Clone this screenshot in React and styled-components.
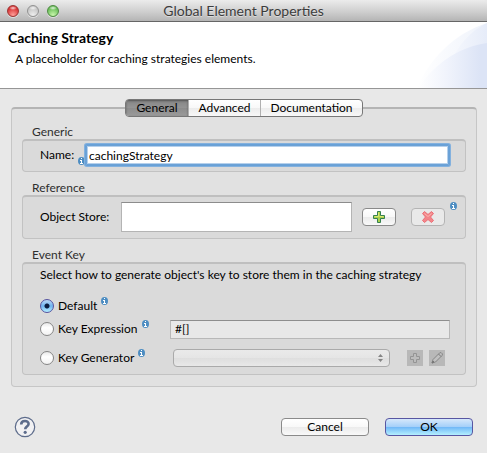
import React, { useState } from "react";
import styled, { createGlobalStyle, css } from "styled-components";

const Global = createGlobalStyle`
  *, *::before, *::after { box-sizing: border-box; }
  body { margin: 0; background: #e8e8e8; }
  body, button, input, select, textarea {
    font: 12px/16px Lato, "Open Sans", sans-serif;
    color: #000;
  }
`;

const Dialog = styled.main`
  min-height: 100vh;
  display: flex;
  flex-direction: column;
  background: #e8e8e8;
`;

const TitleBar = styled.header`
  height: 22px;
  display: grid;
  grid-template-columns: 72px 1fr 72px;
  align-items: center;
  background: linear-gradient(#ececec, #cfcfcf 55%, #b4b4b4);
  border-bottom: 1px solid #666;
  border-radius: 4px 4px 0 0;
`;

const WindowButtons = styled.div`
  display: flex;
  gap: 8px;
  padding-left: 7px;
`;

const WindowButton = styled.button`
  width: 12px;
  height: 12px;
  padding: 0;
  border: 1px solid ${(p) => p.$edge};
  border-radius: 50%;
  background: radial-gradient(ellipse 4px 2px at 50% 20%, #ffffffd0, #ffffff00),
    radial-gradient(circle at 50% 90%, ${(p) => p.$light}, ${(p) => p.$tone} 75%);
  box-shadow: 0 1px 0 #ffffff80;
`;

const WindowTitle = styled.h1`
  margin: 0;
  text-align: center;
  font-size: 14px;
  line-height: 20px;
  font-weight: 400;
  color: #3c3c3c;
  text-shadow: 0 1px 0 #ffffff70;
`;

const Banner = styled.section`
  height: 67px;
  display: flex;
  justify-content: space-between;
  background: #fff;
  border-bottom: 1px solid #969696;
`;

const BannerText = styled.div`
  padding: 7px 0 0 8px;
`;

const Heading = styled.h2`
  margin: 0;
  font-size: 14px;
  line-height: 18px;
  font-weight: 700;
`;

const Description = styled.p`
  margin: 4px 0 0 7px;
`;

const Content = styled.div`
  padding: 10px 10px 0 11px;
`;

const TabList = styled.div`
  position: relative;
  z-index: 1;
  width: fit-content;
  height: 18px;
  margin: 0 auto -10px;
  display: flex;
  border: 1px solid #777;
  border-radius: 4px;
  overflow: hidden;
  background: linear-gradient(#fff, #f8f8f8 50%, #ececec 51%, #f8f8f8);
`;

const Tab = styled.button`
  width: ${(p) => p.$width};
  height: 16px;
  padding: 0;
  border: 0;
  border-left: 1px solid #b0b0b0;
  background: none;
  &:first-child { border-left: 0; }
  ${(p) => p["aria-selected"] && css`
    background: linear-gradient(#858585, #959595 50%, #8c8c8c 51%, #9a9a9a);
    box-shadow: inset 0 1px 2px #555;
  `}
`;

const Panel = styled.section`
  padding: 15px 10px 11px;
  border: 1px solid #c6c6c6;
  border-top: 2px solid #b4b4b4;
  border-radius: 4px;
  background: #e1e1e1;
`;

const Group = styled.fieldset`
  min-width: 0;
  margin: 0 0 8px;
  padding: 0;
  border: 0;
  &:last-child { margin-bottom: 0; }
`;

const GroupTitle = styled.legend`
  height: 15px;
  padding: 0 0 0 10px;
  line-height: 15px;
  color: #2e2e2e;
`;

const GroupBox = styled.div`
  min-height: ${(p) => p.$height};
  padding: 0 ${(p) => p.$right || "15px"} ${(p) => p.$bottom || "0"} 17px;
  display: flex;
  flex-direction: column;
  justify-content: center;
  border: 1px solid #c2c2c2;
  border-top: 2px solid #bfbfbf;
  border-radius: 4px;
  background: #dadada;
`;

const Row = styled.div`
  display: flex;
  align-items: center;
`;

const NameLabel = styled.label`
  width: 38px;
`;

const NameInput = styled.input`
  flex: 1;
  min-width: 0;
  height: 20px;
  margin: 0 1px;
  padding: 0 2px;
  border: 1px solid #6ca2d6;
  outline: 0;
  border-radius: 1px;
  background: #fff;
  box-shadow: inset 0 0 0 1px #b5d0ec, 0 0 0 1px #68a1d8, 0 0 0 2px #83b1de;
`;

const StoreLabel = styled.label`
  width: 81px;
`;

const StoreField = styled.textarea`
  display: block;
  flex: 1;
  min-width: 0;
  height: 30px;
  padding: 6px 4px;
  resize: none;
  outline: 0;
  border: 1px solid #b4b4b4;
  border-top: 1px solid #8c8c8c;
  background: #fff;
`;

const bevel = css`
  border: 1px solid #8a8a8a;
  border-radius: 4px;
  background: linear-gradient(#fff, #f8f8f8 50%, #ebebeb 51%, #f9f9f9);
`;

const IconButton = styled.button`
  ${bevel}
  width: 34px;
  height: 18px;
  padding: 0;
  margin-left: ${(p) => p.$left};
  display: grid;
  place-items: center;
  &:disabled {
    border-color: #b4b4b4;
    background: #e9e9e9;
  }
`;

const InfoSlot = styled.span`
  display: flex;
  align-self: ${(p) => p.$align || "center"};
  margin-left: ${(p) => p.$left || "0"};
`;

const InfoSvg = styled.svg`
  display: block;
  width: 7px;
  height: 8px;
`;

const Hint = styled.p`
  margin: 0 0 14px;
`;

const OptionList = styled.div`
  display: flex;
  flex-direction: column;
  gap: 5px;
`;

const OptionRow = styled.div`
  display: grid;
  grid-template-columns: 130px 1fr;
  align-items: center;
  min-height: ${(p) => p.$height};
`;

const OptionName = styled.div`
  display: flex;
  align-items: center;
  height: 18px;
`;

const OptionLabel = styled.label`
  display: flex;
  align-items: center;
  gap: 4px;
  white-space: nowrap;
`;

const Radio = styled.input`
  appearance: none;
  width: 14px;
  height: 14px;
  margin: 0;
  border: 1px solid #868686;
  border-radius: 50%;
  background: linear-gradient(#e9e9e9, #fff 40%, #f2f2f2);
  &:checked {
    border-color: #5553a0;
    background: radial-gradient(circle, #0c1d40 0 2px, #0c1d4000 3px),
      linear-gradient(#bcd8f6, #6fb4f0 50%, #b5f0ff);
  }
`;

const ExpressionInput = styled.input`
  width: 100%;
  min-width: 0;
  height: 19px;
  padding: 0 4px 2px;
  border: 1px solid #b8b8b8;
  border-top-color: #8e8e8e;
  outline: 0;
  background: #e8e8e8;
`;

const GeneratorTools = styled.div`
  display: flex;
  align-items: center;
  padding: 0 5px 0 3px;
`;

const SelectWrap = styled.div`
  position: relative;
  flex: 1;
  min-width: 0;
  height: 18px;
  margin-right: 17px;
`;

const Select = styled.select`
  display: block;
  appearance: none;
  width: 100%;
  height: 18px;
  padding: 0 16px 0 8px;
  border: 1px solid #aaa;
  border-radius: 4px;
  background: linear-gradient(#eaeaea, #e5e5e5 50%, #dedede 51%, #e8e8e8);
  opacity: 1;
`;

const Arrows = styled.svg`
  position: absolute;
  right: 7px;
  top: 5px;
  width: 5px;
  height: 8px;
  pointer-events: none;
`;

const ToolButton = styled.button`
  width: 16px;
  height: 16px;
  padding: 0;
  margin-left: ${(p) => p.$left || "0"};
  display: grid;
  place-items: center;
  border: 0;
  background: #b8b8b8;
`;

const Footer = styled.footer`
  display: flex;
  align-items: center;
  gap: 16px;
  padding: 29px 14px 14px;
`;

const HelpButton = styled.button`
  width: 22px;
  height: 22px;
  padding: 0;
  margin-right: auto;
  border: 0;
  background: none;
  svg { display: block; }
`;

const ActionButton = styled.button`
  ${bevel}
  width: 88px;
  height: 18px;
  padding: 0;
  line-height: 16px;
  ${(p) => p.$primary && css`
    border-color: #5856a2;
    background: linear-gradient(#d6e8fb, #a5d0f9 48%, #72b9f7 52%, #b4f0ff);
  `}
`;

function Info() {
  return (
    <InfoSvg viewBox="0 0 7 8" role="img" aria-label="Information">
      <ellipse cx="3.5" cy="4" rx="3.5" ry="4" fill="#4d8dc2" />
      <path d="M3 1h1v1H3zM2 3h2v3h1v1H2V6h1V4H2z" fill="#fff" />
    </InfoSvg>
  );
}

function Swoosh() {
  return (
    <svg width="72" height="66" viewBox="0 0 72 66" aria-hidden="true">
      <defs>
        <linearGradient id="arcWide" x1="0" x2="1">
          <stop offset="0" stopColor="#fff" />
          <stop offset="1" stopColor="#eff3fb" />
        </linearGradient>
        <linearGradient id="arcMid" x1="0" x2="1">
          <stop offset="0" stopColor="#fafbfe" />
          <stop offset="1" stopColor="#e6ecf9" />
        </linearGradient>
        <linearGradient id="arcLow" x1="0" x2="1">
          <stop offset="0" stopColor="#fff" />
          <stop offset="0.4" stopColor="#f1f4fc" />
          <stop offset="0.9" stopColor="#dce4f6" />
        </linearGradient>
      </defs>
      <path d="M2 66C14 38 38 12 72 1V66Z" fill="url(#arcWide)" />
      <path d="M26 66C32 40 48 12 72 1V66Z" fill="url(#arcMid)" />
      <path d="M3 66C18 44 42 25 72 21V66Z" fill="url(#arcLow)" />
    </svg>
  );
}

const TABS = [
  { name: "General", width: "62px" },
  { name: "Advanced", width: "72px" },
  { name: "Documentation", width: "102px" },
];

export default function App() {
  const [tab, setTab] = useState("General");
  const [key, setKey] = useState("default");
  const radio = (value, label) => (
    <OptionLabel>
      <Radio type="radio" name="eventKey" checked={key === value} onChange={() => setKey(value)} />
      {label}
    </OptionLabel>
  );

  return (
    <>
      <Global />
      <Dialog>
        <TitleBar>
          <WindowButtons>
            <WindowButton aria-label="Close" $edge="#9c3533" $tone="#d5292b" $light="#ffa09a" />
            <WindowButton aria-label="Minimize" $edge="#929292" $tone="#c2c2c2" $light="#eee" />
            <WindowButton aria-label="Zoom" $edge="#4f8a43" $tone="#62b952" $light="#c9f7ac" />
          </WindowButtons>
          <WindowTitle>Global Element Properties</WindowTitle>
        </TitleBar>

        <Banner>
          <BannerText>
            <Heading>Caching Strategy</Heading>
            <Description>A placeholder for caching strategies elements.</Description>
          </BannerText>
          <Swoosh />
        </Banner>

        <Content>
          <TabList role="tablist">
            {TABS.map((t) => (
              <Tab
                key={t.name}
                role="tab"
                aria-selected={tab === t.name}
                $width={t.width}
                onClick={() => setTab(t.name)}
              >
                {t.name}
              </Tab>
            ))}
          </TabList>

          <Panel>
            <Group>
              <GroupTitle>Generic</GroupTitle>
              <GroupBox $height="33px" $bottom="2px">
                <Row>
                  <NameLabel htmlFor="name">Name:</NameLabel>
                  <InfoSlot $align="flex-end"><Info /></InfoSlot>
                  <NameInput id="name" defaultValue="cachingStrategy" />
                </Row>
              </GroupBox>
            </Group>

            <Group>
              <GroupTitle>Reference</GroupTitle>
              <GroupBox $height="44px" $right="8px" $bottom="2px">
                <Row>
                  <StoreLabel htmlFor="store">Object Store:</StoreLabel>
                  <StoreField id="store" />
                  <IconButton aria-label="Add" $left="10px">
                    <svg width="12" height="12" viewBox="0 0 12 12">
                      <path d="M4.5.5h3v4h4v3h-4v4h-3v-4h-4v-3h4z" fill="#a9d14c" stroke="#35804f" />
                      <path d="M5.5 1.5v4h-4M6.5 5.5h4" stroke="#dbe873" fill="none" />
                    </svg>
                  </IconButton>
                  <IconButton aria-label="Remove" $left="15px" disabled>
                    <svg width="12" height="12" viewBox="0 0 12 12">
                      <path
                        d="M.5 2.5 2.5.5 6 3.5 9.5.5l2 2L8.5 6l3 3.5-2 2L6 8.5l-3.5 3-2-2L3.5 6z"
                        fill="#f3858a"
                        stroke="#ea6f76"
                      />
                      <path d="M2.5 2.5 6 5.5l3.5-3" stroke="#f9b5ad" fill="none" />
                    </svg>
                  </IconButton>
                  <InfoSlot $align="flex-start" $left="5px"><Info /></InfoSlot>
                </Row>
              </GroupBox>
            </Group>

            <Group>
              <GroupTitle>Event Key</GroupTitle>
              <GroupBox $height="113px">
                <Hint>Select how to generate object's key to store them in the caching strategy</Hint>
                <OptionList>
                  <OptionRow $height="18px">
                    <OptionName>
                      {radio("default", "Default")}
                      <InfoSlot $align="flex-start" $left="4px"><Info /></InfoSlot>
                    </OptionName>
                  </OptionRow>
                  <OptionRow $height="19px">
                    <OptionName>
                      {radio("expression", "Key Expression")}
                      <InfoSlot $align="flex-start" $left="4px"><Info /></InfoSlot>
                    </OptionName>
                    <ExpressionInput aria-label="Key expression value" defaultValue="#[]" readOnly />
                  </OptionRow>
                  <OptionRow $height="28px">
                    <OptionName>
                      {radio("generator", "Key Generator")}
                      <InfoSlot $align="flex-start" $left="4px"><Info /></InfoSlot>
                    </OptionName>
                    <GeneratorTools>
                      <SelectWrap>
                        <Select aria-label="Key generator" disabled />
                        <Arrows viewBox="0 0 5 8" aria-hidden="true">
                          <path d="M0 3 2.5 0 5 3zM0 5h5L2.5 8z" fill="#858585" />
                        </Arrows>
                      </SelectWrap>
                      <ToolButton aria-label="Add key generator" disabled>
                        <svg width="12" height="12" viewBox="0 0 12 12">
                          <path d="M4.5 1.5h3v3h3v3h-3v3h-3v-3h-3v-3h3z" fill="#bcbcbc" stroke="#949494" />
                        </svg>
                      </ToolButton>
                      <ToolButton aria-label="Edit key generator" $left="6px" disabled>
                        <svg width="14" height="14" viewBox="0 0 14 14">
                          <path d="m2 12 1-3.5L9.5 2 11 1.5 12.5 3 12 4.5 5.5 11z" fill="#c0c0c0" stroke="#858585" />
                          <path d="m8.5 3 2.5 2.5M2 12l1-2 1 1z" stroke="#777" fill="#777" />
                        </svg>
                      </ToolButton>
                    </GeneratorTools>
                  </OptionRow>
                </OptionList>
              </GroupBox>
            </Group>
          </Panel>
        </Content>

        <Footer>
          <HelpButton aria-label="Help">
            <svg width="22" height="22" viewBox="0 0 22 22">
              <circle cx="11" cy="11" r="9.7" fill="#f1f1f3" stroke="#5d6c8b" strokeWidth="1.2" />
              <path
                d="M7.2 8.4C7.2 4 14.8 4 14.6 8c-.1 2.5-3.4 2.6-3.4 5.2"
                fill="none"
                stroke="#5d6c8b"
                strokeWidth="2.6"
              />
              <circle cx="11.2" cy="16.3" r="1.6" fill="#5d6c8b" />
            </svg>
          </HelpButton>
          <ActionButton>Cancel</ActionButton>
          <ActionButton $primary>OK</ActionButton>
        </Footer>
      </Dialog>
    </>
  );
}
